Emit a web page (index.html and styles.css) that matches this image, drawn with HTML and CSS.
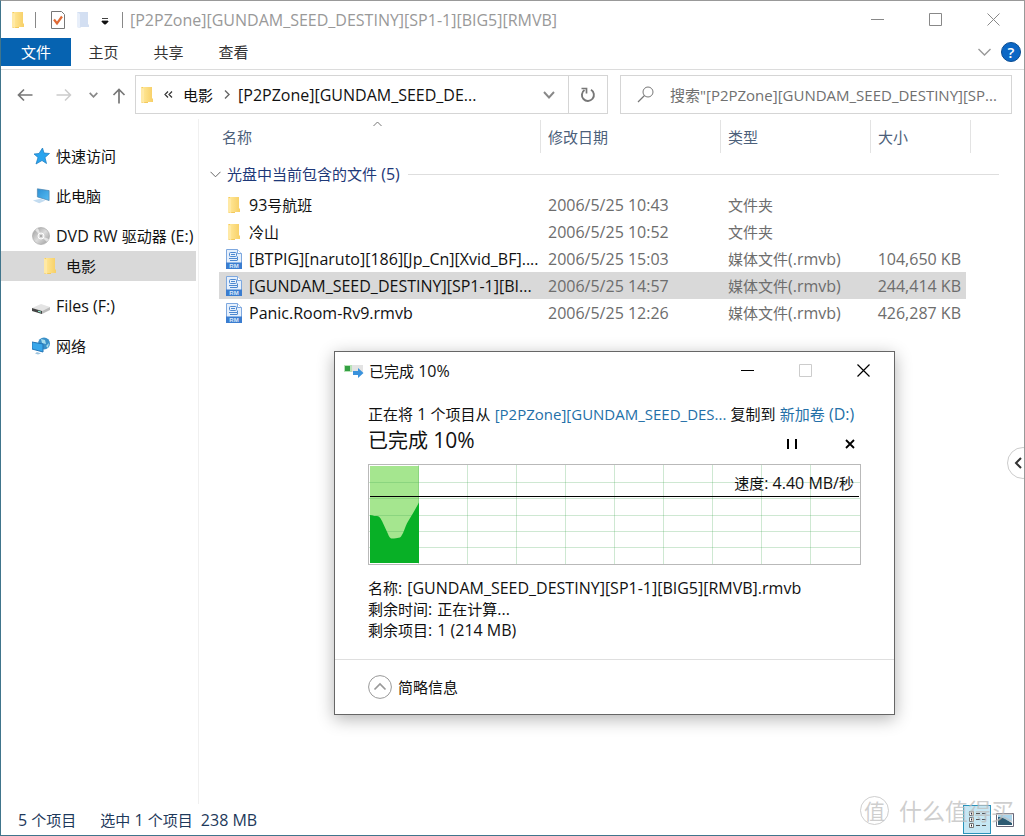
FILE: index.html
```html
<!DOCTYPE html>
<html lang="zh-CN">
<head>
<meta charset="utf-8">
<title>[P2PZone][GUNDAM_SEED_DESTINY][SP1-1][BIG5][RMVB]</title>
<link rel="stylesheet" href="styles.css">
</head>
<body>
<svg class="defs" width="0" height="0" aria-hidden="true">
  <linearGradient id="gold" x1="0" x2="1"><stop offset="0" stop-color="#ffe694"/><stop offset="1" stop-color="#f7cf66"/></linearGradient>
  <linearGradient id="disc" x1="0" y1="0" x2="1" y2="1"><stop offset="0" stop-color="#999"/><stop offset=".5" stop-color="#dcdcdc"/><stop offset="1" stop-color="#999"/></linearGradient>
  <linearGradient id="screen" x1="0" y1="0" x2="1" y2="1"><stop offset="0" stop-color="#2d8fd3"/><stop offset="1" stop-color="#55bdf4"/></linearGradient>
  <symbol id="folder" viewBox="0 0 14 18"><path d="M1 1h7v16H2l-1-1z" fill="#f3c95d"/><path d="M3 1h9v11l1 1v3H5l-2 1z" fill="url(#gold)"/><path d="M1 1l3 2v14l-3-1z" fill="#ffe9a5"/></symbol>
  <symbol id="rm" viewBox="0 0 18 20"><path d="M1.500 .5h11l4 4v15h-15z" fill="#e6f0fc" stroke="#7ea8df"/><path d="M12.500 .5v4h4" fill="#fff" stroke="#7ea8df"/><rect x="4.500" y="3.500" width="7" height="4" rx="1" fill="none" stroke="#4d88d0"/><path d="M6 5.500h4M4 9.500h8.500v-2M5 11.500h7M12.500 9.500v2" stroke="#4d88d0" fill="none"/><path d="M1 13.500h16V20H1z" fill="#3b7dd0"/></symbol>
</svg>
<main class="window">
  <header class="titlebar">
    <svg class="t-folder" width="14" height="18"><use href="#folder"/></svg>
    <span class="sep"></span>
    <button class="plain t-check" aria-label="属性"><svg width="16" height="18" viewBox="0 0 16 18"><path d="M1.500 .5h10l3 3v14h-13z" fill="#fff" stroke="#777"/><path d="M4 8.500l3 4 5-7" fill="none" stroke="#e06a35" stroke-width="2.200"/></svg></button>
    <button class="plain t-new" aria-label="新建文件夹"><svg width="14" height="18" viewBox="0 0 14 18"><path d="M1 1h11v12l1 1v2H5l-1 1-3-1z" fill="#d3dff2"/><path d="M1 1l3 2v14l-3-1z" fill="#e8effa"/></svg></button>
    <button class="plain t-more" aria-label="自定义"><svg width="8" height="7" viewBox="0 0 8 7"><path d="M1 .5h6M1 3h6v1H6v1H5v1H3V5H2V4H1z" fill="#111" stroke="#111" stroke-width=".8"/></svg></button>
    <span class="sep"></span>
    <h1 class="caption">[P2PZone][GUNDAM_SEED_DESTINY][SP1-1][BIG5][RMVB]</h1>
    <div class="controls">
      <button class="plain" aria-label="最小化"><svg width="13" height="13"><path d="M0 6.500h13" stroke="#888"/></svg></button>
      <button class="plain" aria-label="最大化"><svg width="13" height="13"><path d="M.5 .5h12v12H.5z" fill="none" stroke="#888"/></svg></button>
      <button class="plain" aria-label="关闭"><svg width="13" height="13"><path d="M.5 .5l12 12M12.500 .5l-12 12" stroke="#888"/></svg></button>
    </div>
  </header>
  <nav class="ribbon">
    <button class="tab zh file">文件</button><button class="tab zh">主页</button><button class="tab zh">共享</button><button class="tab zh">查看</button>
    <button class="plain expand" aria-label="展开功能区"><svg width="13" height="8" viewBox="0 0 13 8"><path d="M.5 1l6 6 6-6" fill="none" stroke="#999" stroke-width="1.400"/></svg></button>
    <button class="help" aria-label="帮助">?</button>
  </nav>
  <div class="addressbar">
    <div class="history">
      <button class="plain" aria-label="后退"><svg width="16" height="14" viewBox="0 0 16 14"><path d="M15.500 7H1.500M7 1.500L1.500 7 7 12.500" fill="none" stroke="#777" stroke-width="1.700"/></svg></button>
      <button class="plain fwd" aria-label="前进"><svg width="16" height="14" viewBox="0 0 16 14"><path d="M.5 7h14M9 1.500L14.500 7 9 12.500" fill="none" stroke="#ccc" stroke-width="1.500"/></svg></button>
      <button class="plain recent" aria-label="最近"><svg width="9" height="6" viewBox="0 0 9 6"><path d="M.7 .8l3.800 4 3.800-4" fill="none" stroke="#888" stroke-width="1.700"/></svg></button>
      <button class="plain up" aria-label="上移"><svg width="14" height="16" viewBox="0 0 14 16"><path d="M7 15.500v-14M1.500 7L7 1.500 12.500 7" fill="none" stroke="#777" stroke-width="1.700"/></svg></button>
    </div>
    <div class="path">
      <svg width="14" height="18"><use href="#folder"/></svg>
      <svg class="laquo" width="9" height="7" viewBox="0 0 9 7"><path d="M4 .5l-3 3 3 3M8 .5l-3 3 3 3" fill="none" stroke="#333" stroke-width="1.200"/></svg>
      <a href="#" class="zh">电影</a>
      <svg class="crumb" width="6" height="9" viewBox="0 0 6 9"><path d="M1 .5l4 4-4 4" fill="none" stroke="#666" stroke-width="1.400"/></svg>
      <a href="#" class="here">[P2PZone][GUNDAM_SEED_DE...</a>
      <button class="plain drop" aria-label="展开"><svg width="12" height="8" viewBox="0 0 12 8"><path d="M1 1l5 5.500L11 1" fill="none" stroke="#888" stroke-width="1.900"/></svg></button>
      <button class="plain refresh" aria-label="刷新"><svg width="16" height="16" viewBox="0 0 16 16"><path d="M11 2.800A6 6 0 1 1 4.500 3" fill="none" stroke="#777" stroke-width="1.900"/><path d="M1.500 1.500h5v5" fill="none" stroke="#777" stroke-width="1.700"/></svg></button>
    </div>
    <label class="search">
      <svg width="17" height="17" viewBox="0 0 17 17"><circle cx="11" cy="6" r="5" fill="none" stroke="#777"/><path d="M7.500 9.500L1 16" stroke="#777" stroke-width="1.300"/></svg>
      <input type="text" aria-label="搜索" placeholder="搜索&quot;[P2PZone][GUNDAM_SEED_DESTINY][SP...">
    </label>
  </div>
  <div class="content">
    <nav class="side">
      <a href="#"><svg width="18" height="18" viewBox="0 0 18 18"><path d="M10.500 1l1.500 5 5.500 .5-4.500 4 1.500 6-4.500-3-6 3.500 2-6.500-4-3.500 5-.5z" fill="#29a4ee" stroke="#1879bd" stroke-width=".7"/></svg><span class="zh">快速访问</span></a>
      <a href="#"><svg width="20" height="18" viewBox="0 0 20 18"><path d="M6 1l13 2v11L6 10z" fill="url(#screen)" stroke="#4f86b0" stroke-width=".8"/><path d="M1 14l8-2 6 2-7 3z" fill="#c3dcf0"/></svg><span class="zh">此电脑</span></a>
      <a href="#"><svg width="18" height="18" viewBox="0 0 18 18"><circle cx="9" cy="9" r="8.500" fill="url(#disc)" stroke="#aaa" stroke-width=".7"/><path d="M9 9L3 3l3-2zM9 9l6 6 2-3z" fill="#f5f5f5" opacity=".7"/><circle cx="9" cy="9" r="3" fill="#ddd" stroke="#fff"/><circle cx="9" cy="9" r="1.200" fill="#aaa"/></svg><span>DVD RW <b class="zh">驱动器</b> (E:)</span></a>
      <a href="#" class="sub on"><svg width="14" height="18"><use href="#folder"/></svg><span class="zh">电影</span></a>
      <a href="#"><svg width="18" height="18" viewBox="0 0 18 18"><path d="M0 11l9-4 9 3-8 4z" fill="#e4e4e4"/><path d="M0 11l10 3v3L0 14z" fill="#444"/><path d="M10 14l8-4v3l-8 4z" fill="#bbb"/><path d="M6 14.200l3 .9" stroke="#9fd"/></svg><span>Files (F:)</span></a>
      <a href="#"><svg width="18" height="18" viewBox="0 0 18 18"><circle cx="12" cy="6.500" r="6" fill="#3a90c8"/><path d="M9 2l4 1 1 4-4-1zM14 9l3-3-1 5z" fill="#a7dcec"/><path d="M0 5l11 2v8L0 12z" fill="#38a7ea" stroke="#2475b5"/><path d="M5 15l4 1.500-3 1-3-1z" fill="#9ec4de"/></svg><span class="zh">网络</span></a>
    </nav>
    <section class="list">
      <table>
        <colgroup><col><col class="c-date"><col class="c-type"><col class="c-size"><col class="c-rest"></colgroup>
        <thead><tr><th class="zh sorted">名称<svg width="9" height="6" viewBox="0 0 9 6"><path d="M.5 5l4-4 4 4" fill="none" stroke="#777"/></svg></th><th class="zh">修改日期</th><th class="zh">类型</th><th class="zh">大小</th><td></td></tr></thead>
        <tbody>
          <tr class="group"><th colspan="5"><div><svg width="11" height="7" viewBox="0 0 11 7"><path d="M.5 .8l5 5 5-5" fill="none" stroke="#666"/></svg><span><b class="zh">光盘中当前包含的文件</b> (5)</span><i></i></div></th></tr>
          <tr><td><div class="name"><svg width="14" height="18"><use href="#folder"/></svg><span>93<b class="zh">号航班</b></span></div></td><td>2006/5/25 10:43</td><td class="zh">文件夹</td><td></td><td></td></tr>
          <tr><td><div class="name"><svg width="14" height="18"><use href="#folder"/></svg><span class="zh">冷山</span></div></td><td>2006/5/25 10:52</td><td class="zh">文件夹</td><td></td><td></td></tr>
          <tr><td><div class="name"><svg width="18" height="20"><use href="#rm"/><text x="9" y="19" text-anchor="middle" class="rm-text">RM</text></svg><span>[BTPIG][naruto][186][Jp_Cn][Xvid_BF]....</span></div></td><td>2006/5/25 15:03</td><td><b class="zh">媒体文件</b>(.rmvb)</td><td>104,650 KB</td><td></td></tr>
          <tr class="on"><td><div class="name"><svg width="18" height="20"><use href="#rm"/><text x="9" y="19" text-anchor="middle" class="rm-text">RM</text></svg><span>[GUNDAM_SEED_DESTINY][SP1-1][BI...</span></div></td><td>2006/5/25 14:57</td><td><b class="zh">媒体文件</b>(.rmvb)</td><td>244,414 KB</td><td></td></tr>
          <tr><td><div class="name"><svg width="18" height="20"><use href="#rm"/><text x="9" y="19" text-anchor="middle" class="rm-text">RM</text></svg><span>Panic.Room-Rv9.rmvb</span></div></td><td>2006/5/25 12:26</td><td><b class="zh">媒体文件</b>(.rmvb)</td><td>426,287 KB</td><td></td></tr>
        </tbody>
      </table>
    </section>
  </div>
  <footer class="status">
    <span>5 <b class="zh">个项目</b></span><span><b class="zh">选中</b> 1 <b class="zh">个项目</b></span><span>238 MB</span>
    <div class="views">
      <button class="plain active" aria-label="详细信息"><svg width="20" height="20" viewBox="0 0 20 20"><path d="M2.500 1.500h4v4h-4zM2.500 7.500h4v4h-4zM2.500 13.500h4v4h-4z" fill="#fff" stroke="#777"/><path d="M4 3.500h1M4 9.500h1M4 15.500h1" stroke="#222" stroke-width="2"/><path d="M9 3.500h4M15 3.500h4M9 9.500h4M15 9.500h4M9 15.500h4M15 15.500h4" stroke="#555"/></svg></button>
      <button class="plain" aria-label="大图标"><svg width="18" height="14" viewBox="0 0 18 14"><path d="M.5 .5h17v13H.5z" fill="#fff" stroke="#667"/><path d="M2 2h14v6H2z" fill="#a9d4ea"/><path d="M2 4c4 0 7 2 14 6v2H2z" fill="#2d5b72"/></svg></button>
    </div>
  </footer>

  <button class="panel-handle" aria-label="展开面板"><svg width="8" height="12" viewBox="0 0 8 12"><path d="M7 1L2 6l5 5" fill="none" stroke="#333" stroke-width="2"/></svg></button>

  <section class="dialog" role="dialog" aria-label="已完成 10%">
    <header class="d-title">
      <svg width="20" height="14" viewBox="0 0 20 14"><path d="M8 1h11v7H8z" fill="#e3e3e3"/><path d="M0 1h8v7H0z" fill="#b9e3b9"/><path d="M1 2h5v5H1z" fill="#34a043"/><path d="M9 7h5V4l5.500 5-5.500 5v-3H9z" fill="#3a92dc"/></svg>
      <span><b class="zh">已完成</b> 10%</span>
      <div class="controls">
        <button class="plain" aria-label="最小化"><svg width="13" height="13"><path d="M0 6.500h13" stroke="#000"/></svg></button>
        <button class="plain" aria-label="最大化" disabled><svg width="13" height="13"><path d="M.5 .5h12v12H.5z" fill="none" stroke="#ccc"/></svg></button>
        <button class="plain" aria-label="关闭"><svg width="13" height="13"><path d="M.5 .5l12 12M12.500 .5l-12 12" stroke="#000" stroke-width="1.200"/></svg></button>
      </div>
    </header>
    <div class="d-body">
      <p class="route"><b class="zh">正在将</b> 1 <b class="zh">个项目从</b> <a href="#" class="source">[P2PZone][GUNDAM_SEED_DES...</a> <b class="zh">复制到</b> <a href="#"><b class="zh">新加卷</b> (D:)</a></p>
      <div class="progress">
        <h2>已完成 <span>10%</span></h2>
        <button class="plain" aria-label="暂停"><svg width="10" height="10"><path d="M1 0v10M9 0v10" stroke="#000" stroke-width="2"/></svg></button>
        <button class="plain" aria-label="取消"><svg width="10" height="10"><path d="M1 1l8 8M9 1L1 9" stroke="#000" stroke-width="1.800"/></svg></button>
      </div>
      <div class="chart">
        <svg viewBox="0 0 491 99" preserveAspectRatio="none">
          <path d="M1 1h49v97H1z" fill="#a5e68f"/>
          <path d="M49.500 0v99M98.500 0v99M147.500 0v99M196.500 0v99M245.500 0v99M294.500 0v99M343.500 0v99M392.500 0v99M441.500 0v99M0 17.500h491M0 33.500h491M0 50.500h491M0 66.500h491M0 82.500h491" stroke="#40a850" stroke-opacity=".26" fill="none"/>
          <path d="M1 50c3 0 4 1.500 6 1 3 0 4 1 6 5l6 13c2 5 3 4.500 6 4.500s4-1 6-1c3-2 5-11 8-16l6-10 5-9V98H1z" fill="#08b026"/>
          <path d="M1 31.500h489" stroke="#000"/>
        </svg>
        <span><b class="zh">速度</b>: 4.40 MB/<b class="zh">秒</b></span>
      </div>
      <dl class="facts">
        <div><dt><b class="zh">名称</b>:</dt><dd>[GUNDAM_SEED_DESTINY][SP1-1][BIG5][RMVB].rmvb</dd></div>
        <div><dt><b class="zh">剩余时间</b>:</dt><dd><b class="zh">正在计算</b>...</dd></div>
        <div><dt><b class="zh">剩余项目</b>:</dt><dd>1 (214 MB)</dd></div>
      </dl>
    </div>
    <footer class="d-foot">
      <button class="plain less"><svg width="24" height="24" viewBox="0 0 24 24"><circle cx="12" cy="12" r="11.400" fill="none" stroke="#999"/><path d="M6.500 14.500L12 9l5.500 5.500" fill="none" stroke="#999" stroke-width="1.700"/></svg><span class="zh">简略信息</span></button>
    </footer>
  </section>

  <div class="watermark"><span class="seal">值</span><span>什么值得买</span></div>
</main>
</body>
</html>
```
FILE: styles.css
```css
* { box-sizing: border-box; }
body {
  margin: 0;
  background: #fff;
  color: #111;
  font: 16px/20px "Open Sans", "Noto Sans CJK SC", sans-serif;
}
.defs { position: absolute; }
svg { display: block; flex: none; }
b { font-weight: 400; }
a { color: inherit; text-decoration: none; }
button, input { font: inherit; color: inherit; }
.zh { font-size: 15px; }
.plain { display: flex; align-items: center; justify-content: center; padding: 0; border: 0; background: none; }
.rm-text { font: bold 6px "Liberation Sans", sans-serif; fill: #dce9fa; }

.window {
  position: relative;
  display: flex;
  flex-direction: column;
  min-height: 100vh;
  overflow: hidden;
  border: 1px solid #999;
  border-left-color: #40758c;
  border-bottom-color: #40758c;
}

.titlebar { display: flex; align-items: center; height: 37px; padding-left: 10px; }
.sep { width: 1px; height: 16px; background: #888; }
.t-folder { margin-right: 10px; }
.t-check { margin-left: 14px; }
.t-new { margin-left: 10px; }
.t-more { margin: 3px 13px 0 11px; }
.caption { flex: 1; margin: 0 0 0 7px; font-size: 16px; font-weight: 400; color: #999; white-space: nowrap; }
.controls { display: flex; }
.controls button { width: 58px; height: 36px; }
.titlebar .controls { margin-right: 2px; }

.ribbon { display: flex; align-items: center; height: 32px; padding: 0 3px 3px 0; border-bottom: 1px solid #dcdcdc; }
.tab { width: 65px; height: 28px; padding: 0; border: 0; background: none; color: #333; }
.tab.file { width: 70px; background: #0663b1; color: #fff; }
.expand { margin-left: auto; }
.help { width: 20px; height: 20px; margin-left: 10px; padding: 0; border: 1px solid #0a4c91; border-radius: 50%; background: #0b67c5; color: #fff; font-size: 15px; line-height: 18px; font-weight: 600; }

.addressbar { display: grid; grid-template-columns: 134px minmax(0, 473fr) 12px minmax(0, 392fr); height: 49px; padding: 5px 12px 5px 0; }
.history { display: flex; align-items: center; padding-left: 16px; }
.fwd { margin-left: 23px; }
.recent { margin-left: 17px; }
.up { margin: 2px 0 0 14px; }
.path { display: flex; align-items: center; padding-left: 4px; border: 1px solid #d5d5d5; }
.laquo { margin: 0 10px; }
.crumb { margin: 0 8px 0 11px; }
.here { white-space: nowrap; }
.drop { margin-left: auto; width: 38px; height: 100%; }
.refresh { width: 39px; height: 100%; border-left: 1px solid #d5d5d5; }
.search { display: flex; grid-column: 4; align-items: center; padding-left: 16px; border: 1px solid #d5d5d5; }
.search input { flex: 1; min-width: 0; margin-left: 16px; padding: 0; border: 0; outline: 0; background: none; font-size: 15px; }
.search input::placeholder { color: #707070; opacity: 1; }

.content { display: flex; flex: 1; }
.side { width: 198px; padding: 22px 2px 0 0; border-right: 1px solid #f0f0f0; }
.side a { display: flex; align-items: center; gap: 6px; height: 30px; margin-bottom: 10px; padding-left: 31px; white-space: nowrap; }
.side svg { width: 18px; }
.side a:nth-child(3) { margin-bottom: 0; }
.side .sub { gap: 7px; padding-left: 40px; }
.on { background: #d9d9d9; }

.list { flex: 1; min-width: 0; padding: 1px 25px 0 20px; }
table { width: 100%; table-layout: fixed; border-collapse: separate; border-spacing: 0; }
.c-date { width: 180px; }
.c-type { width: 150px; }
.c-size { width: 100px; }
.c-rest { width: 28px; }
th { font-weight: 400; text-align: left; }
thead th { position: relative; height: 33px; padding: 0 7px; border-right: 1px solid #e3e3e3; color: #4c607a; }
thead .sorted { padding-left: 3px; }
.sorted svg { position: absolute; top: 1px; left: calc(50% - 7px); }
.group th { height: 38px; padding: 4px 0 0; }
.group div { display: flex; align-items: center; margin-left: -9px; color: #1e3878; }
.group span { margin: 0 8px 0 6px; }
.group i { flex: 1; height: 1px; background: #dedede; }
tbody td { height: 27px; padding: 0 7px; color: #6d6d6d; white-space: nowrap; }
tbody td:first-child { padding: 0 0 0 6px; color: #111; }
tbody td:nth-child(4) { padding: 0 5px; border-right: 5px solid #fff; text-align: right; }
tbody td:nth-child(5) { background: #fff; }
.name { display: flex; align-items: center; }
.name svg { width: 18px; }
.name span { margin-left: 6px; }

.status { display: flex; align-items: center; height: 31px; padding-left: 17px; color: #1e395b; }
.status span + span { margin-left: 24px; }
.status span:nth-child(3) { margin-left: 8px; }
.views { display: flex; align-items: center; gap: 5px; margin-left: auto; padding-right: 10px; }
.views .active { width: 28px; height: 29px; border: 1px solid #2a93bb; background: #c6e7f4; }

.panel-handle { position: absolute; top: 446px; right: -15px; width: 32px; height: 32px; padding: 0 0 0 6px; border: 1px solid #ccc; border-radius: 50%; background: #fff; }

.dialog {
  position: absolute;
  top: 350px;
  left: 333px;
  width: 561px;
  border: 1px solid #666;
  background: #fff;
  box-shadow: 0 4px 16px rgba(0, 0, 0, .3);
}
.d-title { display: flex; align-items: center; gap: 5px; height: 37px; padding-left: 9px; }
.d-title .controls { margin-left: auto; padding-right: 2px; }
.d-body { padding: 14px 33px 18px; }
.route { margin: 0; white-space: nowrap; line-height: 22px; }
.route a { color: #2470a8; }
.route .source { font-size: 15px; }
.progress { display: flex; align-items: center; height: 39px; padding-bottom: 8px; }
.progress h2 { flex: 1; margin: 0; font-size: 20px; line-height: 28px; font-weight: 400; }
.progress h2 span { font-size: 21px; }
.progress button { width: 22px; height: 22px; margin: 6px 0 0 36px; }
.chart { display: grid; height: 101px; border: 1px solid #b9b9b9; }
.chart > * { grid-area: 1 / 1; }
.chart svg { width: 100%; height: 99px; }
.chart span { justify-self: end; align-self: start; padding: 8px 6px 0 0; }
.facts { margin: 13px 0 0; line-height: 21px; }
.facts div { display: flex; gap: 5px; height: 21px; }
.facts dd { margin: 0; }
.d-foot { display: flex; padding: 15px 33px; border-top: 1px solid #dfdfdf; }
.less { gap: 6px; }

.watermark {
  position: absolute;
  right: 10px;
  bottom: 10px;
  display: flex;
  align-items: center;
  gap: 10px;
  font: 23px/30px "Noto Sans CJK SC", sans-serif;
  color: rgba(190, 190, 190, .75);
  pointer-events: none;
}
.seal { width: 29px; height: 29px; border: 1px solid; border-radius: 50%; font-size: 21px; line-height: 26px; text-align: center; }
```
